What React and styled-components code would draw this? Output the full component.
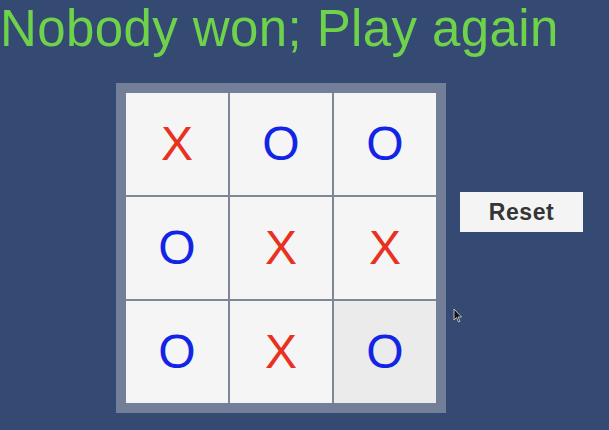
import React from "react";
import styled, { createGlobalStyle } from "styled-components";

const Global = createGlobalStyle`
  html, body { margin: 0; padding: 0; background: #344a72; }
  body { font-family: "Liberation Sans", Arial, sans-serif; }
  #root { width: 609px; height: 430px; overflow: hidden; }
`;

const Page = styled.div`
  position: relative;
  width: 609px;
  height: 430px;
  background: #344a72;
`;

const Title = styled.h1`
  margin: 0;
  padding: 0;
  font-family: "Liberation Sans", Arial, sans-serif;
  font-weight: 400;
  font-size: 51px;
  line-height: 58px;
  letter-spacing: 0.4px;
  color: #6fd24b;
  white-space: nowrap;
`;

const Main = styled.div`
  display: flex;
  align-items: flex-start;
  margin-top: 25px;
  padding-left: 116px;
  gap: 14px;
`;

const Frame = styled.div`
  padding: 10px;
  background: #737f98;
`;

const Grid = styled.div`
  display: grid;
  grid-template-columns: repeat(3, 102px);
  grid-template-rows: 102px 102px 102px;
  gap: 2px;
  background: #7e8798;
`;

const Cell = styled.div`
  display: flex;
  align-items: center;
  justify-content: center;
  background: ${(p) => (p.$hover ? "#ebebeb" : "#f5f5f5")};
  color: ${(p) => (p.$mark === "X" ? "#e8321f" : "#1224e6")};
  font-family: "Liberation Sans", Arial, sans-serif;
  font-size: 48px;
  line-height: 1;
`;

const ResetButton = styled.button`
  margin-top: 109px;
  width: 123px;
  height: 40px;
  padding: 0;
  border: none;
  background: #f4f4f4;
  color: #353535;
  font-family: "Liberation Sans", Arial, sans-serif;
  font-weight: 700;
  font-size: 23px;
  letter-spacing: 0.6px;
  cursor: default;
`;

const Cursor = styled.svg`
  position: absolute;
  left: 453px;
  top: 308px;
`;

const board = ["X", "O", "O", "O", "X", "X", "O", "X", "O"];

export default function App() {
  return (
    <Page>
      <Global />
      <Title>Nobody won; Play again</Title>
      <Main>
        <Frame>
          <Grid>
            {board.map((m, i) => (
              <Cell key={i} $mark={m} $hover={i === 8}>
                {m}
              </Cell>
            ))}
          </Grid>
        </Frame>
        <ResetButton>Reset</ResetButton>
      </Main>
      <Cursor width="10" height="16" viewBox="0 0 10 16">
        <path d="M1 1 L1 12 L3.5 9.5 L5.5 14 L7 13.3 L5 9 L8.5 9 Z" fill="#111" stroke="#ddd" strokeWidth="0.8" />
      </Cursor>
    </Page>
  );
}
